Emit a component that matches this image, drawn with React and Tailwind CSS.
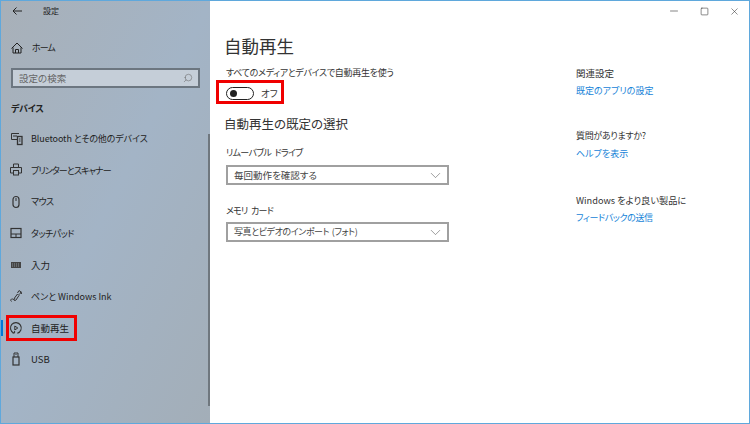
import { ChevronDown, Minus, Square, X, Search } from "lucide-react";

const font = "font-['Noto_Sans_CJK_JP','Noto_Sans',sans-serif] [font-feature-settings:'palt']";

function Icon({ children }) {
  return (
    <svg width="16" height="16" viewBox="0 0 16 16" fill="none" stroke="#333" strokeWidth="1">
      {children}
    </svg>
  );
}

const items = [
  {
    label: "Bluetooth とその他のデバイス",
    text: "text-[9px] tracking-[-0.1px]",
    icon: (
      <Icon>
        <path d="M11 2.500H3.500v6H9M5 5h4" />
        <rect x="9.500" y="5.500" width="4.500" height="8" strokeWidth="1.300" />
        <path d="M11 8h1.500M11 10h1.500" />
      </Icon>
    ),
  },
  {
    label: "プリンターとスキャナー",
    text: "text-[9px] tracking-[-0.9px]",
    icon: (
      <Icon>
        <path d="M5.500 5.500v-3.500h5v3.500" />
        <path d="M5 11H2.500V5.500h11V11H11" />
        <rect x="5.500" y="8.500" width="5" height="4.500" />
      </Icon>
    ),
  },
  {
    label: "マウス",
    text: "text-[9px] tracking-[-0.6px]",
    icon: (
      <Icon>
        <rect x="5" y="2.500" width="6" height="11" rx="3" strokeWidth="1.200" />
        <path d="M8 4v3" />
      </Icon>
    ),
  },
  {
    label: "タッチパッド",
    text: "text-[9px] tracking-[-0.5px]",
    icon: (
      <Icon>
        <rect x="3" y="3.500" width="10" height="9" strokeWidth="1.200" />
        <path d="M3 9h10M8 9v3.500" />
      </Icon>
    ),
  },
  {
    label: "入力",
    text: "text-[9.500px]",
    icon: (
      <Icon>
        <rect x="3" y="5" width="10" height="6" fill="#444" stroke="none" />
        <path d="M4 7h8M4 9h8" stroke="#9aa6b0" strokeWidth="0.800" strokeDasharray="1 1" />
      </Icon>
    ),
  },
  {
    label: "ペンと Windows Ink",
    text: "text-[9px]",
    icon: (
      <Icon>
        <path d="M3.500 13.500c-1.500-1-.5-3 1-2.500s3 1 2-1l3-4 1.500 1.500-3 4.500c-1 1-2 .5-2.500-.5" />
        <path d="M9.500 5l1.500-2.500 2 1.500-1.500 2.500M13 3.500l.5 2.500" />
      </Icon>
    ),
  },
  {
    label: "自動再生",
    text: "text-[9.500px]",
    active: true,
    icon: (
      <Icon>
        <path d="M5.600 12.900A5.400 5.400 0 1 1 9.300 13.200" strokeWidth="1.100" />
        <path d="M6.800 6v4l3-2z" />
        <path d="M4.600 13h2v-2" />
      </Icon>
    ),
  },
  {
    label: "USB",
    text: "text-[9.500px]",
    icon: (
      <Icon>
        <rect x="5" y="6" width="6" height="8" strokeWidth="1.200" />
        <path d="M6 6V2h4v4M7 3.500h.5M8.500 3.500H9" />
      </Icon>
    ),
  },
];

function Dropdown({ value, text }) {
  return (
    <div className="flex items-center justify-between w-[223px] h-[20px] border-2 border-[#a0a0a0] bg-white pl-[6px] pr-[3px] text-[#444]">
      <span className={text}>{value}</span>
      <ChevronDown size={17} strokeWidth={0.8} color="#555" />
    </div>
  );
}

function Related({ title, link, titleText, linkText, className }) {
  return (
    <div className={className}>
      <div className={`leading-[14px] text-[#333] ${titleText}`}>{title}</div>
      <div className={`mt-[4px] leading-[14px] text-[#1683d8] ${linkText}`}>{link}</div>
    </div>
  );
}

export default function App() {
  return (
    <div className={`flex w-[750px] h-[424px] overflow-hidden border border-[#5fa8dc] bg-white ${font}`}>
      <aside className="relative flex flex-col w-[209px] h-full shrink-0 bg-gradient-to-br from-[#a8b0b8] via-[#a3b4c6] to-[#a3aeb8] text-[#222]">
        <div className="flex items-center h-[19px] pl-[11px] gap-[21px] text-[8px]">
          <svg width="10" height="10" viewBox="0 0 10 10" fill="none" stroke="#222" strokeWidth="1">
            <path d="M10 5H1M4.500 1.500L1 5l3.500 3.500" />
          </svg>
          <span>設定</span>
        </div>
        <div className="flex items-center h-[36px] mt-[10px] pl-[10px] gap-[9px] text-[9px] tracking-[-1px]">
          <svg width="12" height="12" viewBox="0 0 12 12" fill="none" stroke="#222" strokeWidth="1">
            <path d="M.5 6.500L6 1l5.500 5.500M2 5.500v5.500h8V5.500M4.500 11V7.500h3V11" />
          </svg>
          <span>ホーム</span>
        </div>
        <div className="flex items-center justify-between mx-[10px] mt-[2px] h-[20px] border-2 border-[#6c7680] bg-[#c5ced8] pl-[6px] pr-[5px] text-[9.500px] text-[#666]">
          <span>設定の検索</span>
          <Search size={10} strokeWidth={1.3} className="-scale-x-100" />
        </div>
        <div className="mt-[11px] ml-[10px] h-[20px] leading-[20px] text-[9px] tracking-[-0.3px] font-bold">デバイス</div>
        <nav className="mt-[4px] flex flex-col">
          {items.map((item) => (
            <div key={item.label} className="relative flex items-center h-[31.500px] pl-[7px] gap-[7px]">
              {item.active && <span className="absolute left-0 top-[8px] h-[16px] w-[2px] bg-[#0078d7]" />}
              {item.icon}
              <span className={item.text}>{item.label}</span>
              {item.active && <span className="absolute left-[5px] top-[3px] w-[71px] h-[26px] border-[3px] border-[#f00000]" />}
            </div>
          ))}
        </nav>
        <span className="absolute right-0 top-[133px] h-[272px] w-[2px] bg-[#6f777e]" />
      </aside>

      <main className="flex-1 flex flex-col min-w-0">
        <div className="flex justify-end items-center h-[20px] gap-[20px] pr-[9px] text-[#333]">
          <Minus size={12} strokeWidth={1.2} />
          <Square size={9} strokeWidth={1.500} />
          <X size={11} strokeWidth={1.200} />
        </div>
        <div className="flex flex-1">
          <section className="w-[366px] pl-[14px] pt-[13px]">
            <h1 className="text-[17.500px] leading-[24px] text-[#333]">自動再生</h1>
            <div className="mt-[8px] ml-[2px] text-[9px] tracking-[-0.3px] leading-[14px] text-[#333]">すべてのメディアとデバイスで自動再生を使う</div>
            <div className="relative flex items-center mt-[5px] ml-[2px] h-[16px] w-fit gap-[7px] text-[9.500px] text-[#333]">
              <span className="flex items-center w-[28px] h-[13px] rounded-full border-[1.500px] border-[#222] pl-[3px]">
                <span className="w-[7px] h-[7px] rounded-full bg-[#222]" />
              </span>
              <span>オフ</span>
              <span className="absolute left-[-10px] top-[-5px] w-[68px] h-[24px] border-[3px] border-[#f00000]" />
            </div>
            <h2 className="mt-[13px] text-[12.500px] leading-[20px] text-[#333]">自動再生の既定の選択</h2>
            <div className="mt-[12px] ml-[2px] text-[9px] tracking-[-0.7px] leading-[14px] text-[#333] [word-spacing:2px]">リムーバブル ドライブ</div>
            <div className="mt-[5px] ml-[2px]"><Dropdown value="毎回動作を確認する" text="text-[9.500px]" /></div>
            <div className="mt-[19px] ml-[2px] text-[9px] tracking-[-0.7px] leading-[14px] text-[#333] [word-spacing:2px]">メモリ カード</div>
            <div className="mt-[4px] ml-[2px]"><Dropdown value="写真とビデオのインポート (フォト)" text="text-[9px] tracking-[-0.4px] [word-spacing:1px]" /></div>
          </section>
          <section className="flex-1 pt-[45px]">
            <Related title="関連設定" link="既定のアプリの設定" titleText="text-[9.500px]" linkText="text-[9px]" />
            <Related title="質問がありますか?" link="ヘルプを表示" titleText="text-[9px] tracking-[-0.3px]" linkText="text-[9px]" className="mt-[31px]" />
            <Related title="Windows をより良い製品に" link="フィードバックの送信" titleText="text-[9.200px]" linkText="text-[9px] tracking-[-0.4px]" className="mt-[32px]" />
          </section>
        </div>
      </main>
    </div>
  );
}
